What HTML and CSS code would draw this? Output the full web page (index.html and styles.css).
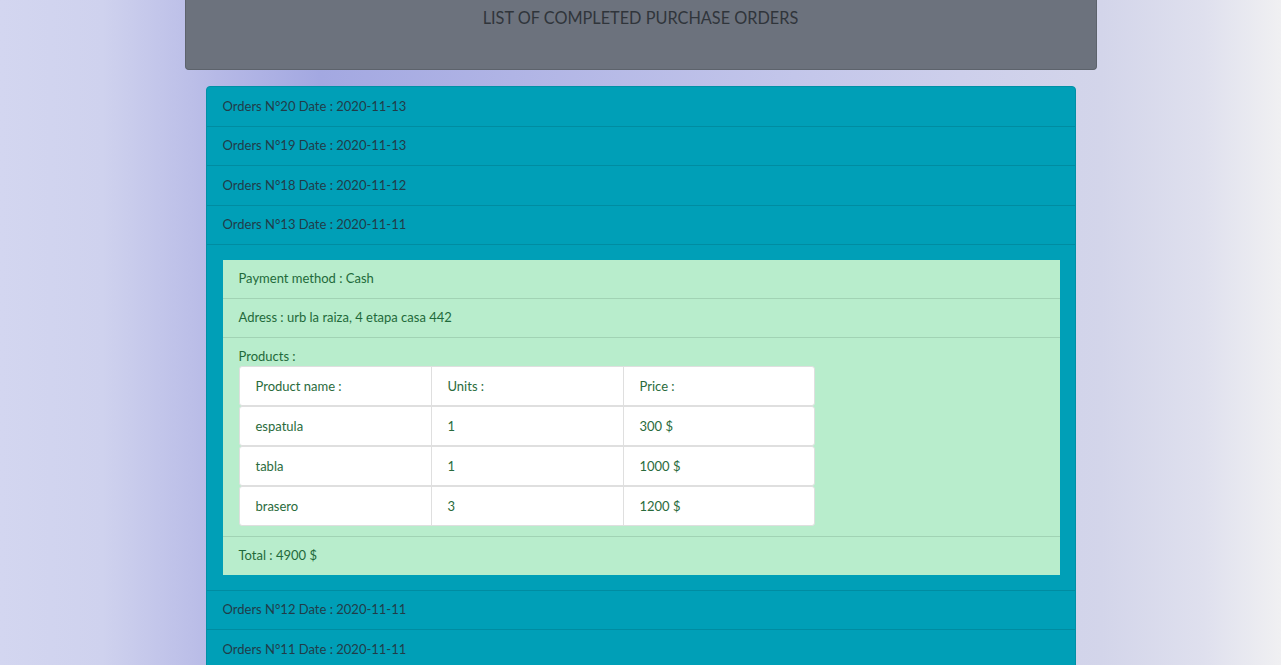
FILE: index.html
```html
<!DOCTYPE html>
<html lang="en">
<head>
<meta charset="utf-8">
<title>Completed purchase orders</title>
<link rel="stylesheet" href="styles.css">
</head>
<body>
<header class="page-header">
  <h1 class="title">LIST OF COMPLETED PURCHASE ORDERS</h1>
</header>
<main class="orders">
  <div class="order-head">Orders N°20 Date : 2020-11-13</div>
  <div class="order-head">Orders N°19 Date : 2020-11-13</div>
  <div class="order-head">Orders N°18 Date : 2020-11-12</div>
  <div class="order-head">Orders N°13 Date : 2020-11-11</div>
  <div class="order-body">
    <ul class="details">
      <li class="detail">Payment method : Cash</li>
      <li class="detail">Adress : urb la raiza, 4 etapa casa 442</li>
      <li class="detail detail-products">
        <div class="products-label">Products :</div>
        <div class="ptable">
          <div class="prow"><div class="pcell">Product name :</div><div class="pcell">Units :</div><div class="pcell">Price :</div></div>
          <div class="prow"><div class="pcell">espatula</div><div class="pcell">1</div><div class="pcell">300 $</div></div>
          <div class="prow"><div class="pcell">tabla</div><div class="pcell">1</div><div class="pcell">1000 $</div></div>
          <div class="prow"><div class="pcell">brasero</div><div class="pcell">3</div><div class="pcell">1200 $</div></div>
        </div>
      </li>
      <li class="detail">Total : 4900 $</li>
    </ul>
  </div>
  <div class="order-head">Orders N°12 Date : 2020-11-11</div>
  <div class="order-head">Orders N°11 Date : 2020-11-11</div>
</main>
</body>
</html>
```
FILE: styles.css
```css
html, body {
  margin: 0;
  padding: 0;
  height: 100%;
  overflow: hidden;
}
body {
  font-family: "Lato", "Noto Sans", sans-serif;
  font-size: 13px;
  background: linear-gradient(to right,
    #d3d6f0 0%, #cfd2ee 8%, #b6b9e6 17%, #a3a8e1 25%,
    #b0b4e5 40%, #c3c6ea 62%, #cdcfeb 75%, #d3d5ea 86%,
    #dfe0ee 94%, #f0f0f2 100%);
}
.page-header {
  width: 912px;
  height: 70px;
  margin: 0 auto;
  box-sizing: border-box;
  background: #6c727d;
  border: 1px solid #5d636c;
  border-top: 0;
  border-radius: 0 0 4px 4px;
  padding-top: 8px;
}
.title {
  margin: 0;
  text-align: center;
  font-weight: 400;
  font-size: 16.3px;
  line-height: 20px;
  color: #30353b;
}
.orders {
  width: 870px;
  margin: 16px auto 0;
  box-sizing: border-box;
  background: #009fb7;
  border: 1px solid #0090a6;
  border-radius: 4px 4px 0 0;
}
.order-head {
  padding: 8.5px 16px 10px;
  line-height: 20px;
  color: #213c49;
  border-bottom: 1px solid #008ca1;
}
.order-body {
  padding: 14.5px 15px 15px 16px;
  border-bottom: 1px solid #008ca1;
}
.details {
  list-style: none;
  margin: 0;
  padding: 0;
  background: #b8edcc;
  color: #1f6a3a;
}
.detail {
  padding: 8px 16px 10px;
  line-height: 20px;
  border-bottom: 1px solid #a1d3b4;
}
.detail:last-child { border-bottom: 0; }
.detail-products { padding-bottom: 10px; }
.ptable {
  width: 576px;
}
.prow {
  display: grid;
  grid-template-columns: 191px 192px 1fr;
  height: 40px;
  box-sizing: border-box;
  background: #fff;
  border: 1px solid #dfdfdf;
  border-radius: 3px;
}
.pcell {
  display: flex;
  align-items: center;
  padding-left: 16px;
  font-size: 13px;
  color: #2a6b3c;
}
.pcell + .pcell { border-left: 1px solid #dfdfdf; }
```
